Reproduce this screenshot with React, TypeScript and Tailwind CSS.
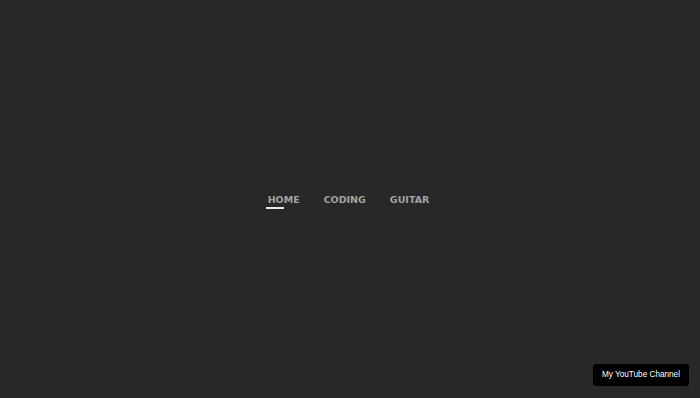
export default function App() {
  const links = ['HOME', 'CODING', 'GUITAR'];
  return (
    <div className="relative flex h-[398px] w-full items-center justify-center bg-[#282828]">
      <nav className="mr-[3px] mt-px flex items-center gap-[24px] font-['DejaVu_Sans',Verdana,sans-serif] text-[9.5px] font-bold text-[#a3a3a3]">
        {links.map((l, i) => (
          <a key={l} href="#" className="relative leading-none">
            {l}
            {i === 0 && (
              <span className="absolute left-[-2px] top-[12px] h-[2px] w-[18px] bg-[#e8e8e8]" />
            )}
          </a>
        ))}
      </nav>
      <a
        href="#"
        className="absolute bottom-[12px] right-[11px] flex h-[22px] items-center rounded-[3px] bg-black px-[9px] font-['Liberation_Sans',Arial,sans-serif] text-[8.2px] text-white"
      >
        My YouTube Channel
      </a>
    </div>
  );
}
